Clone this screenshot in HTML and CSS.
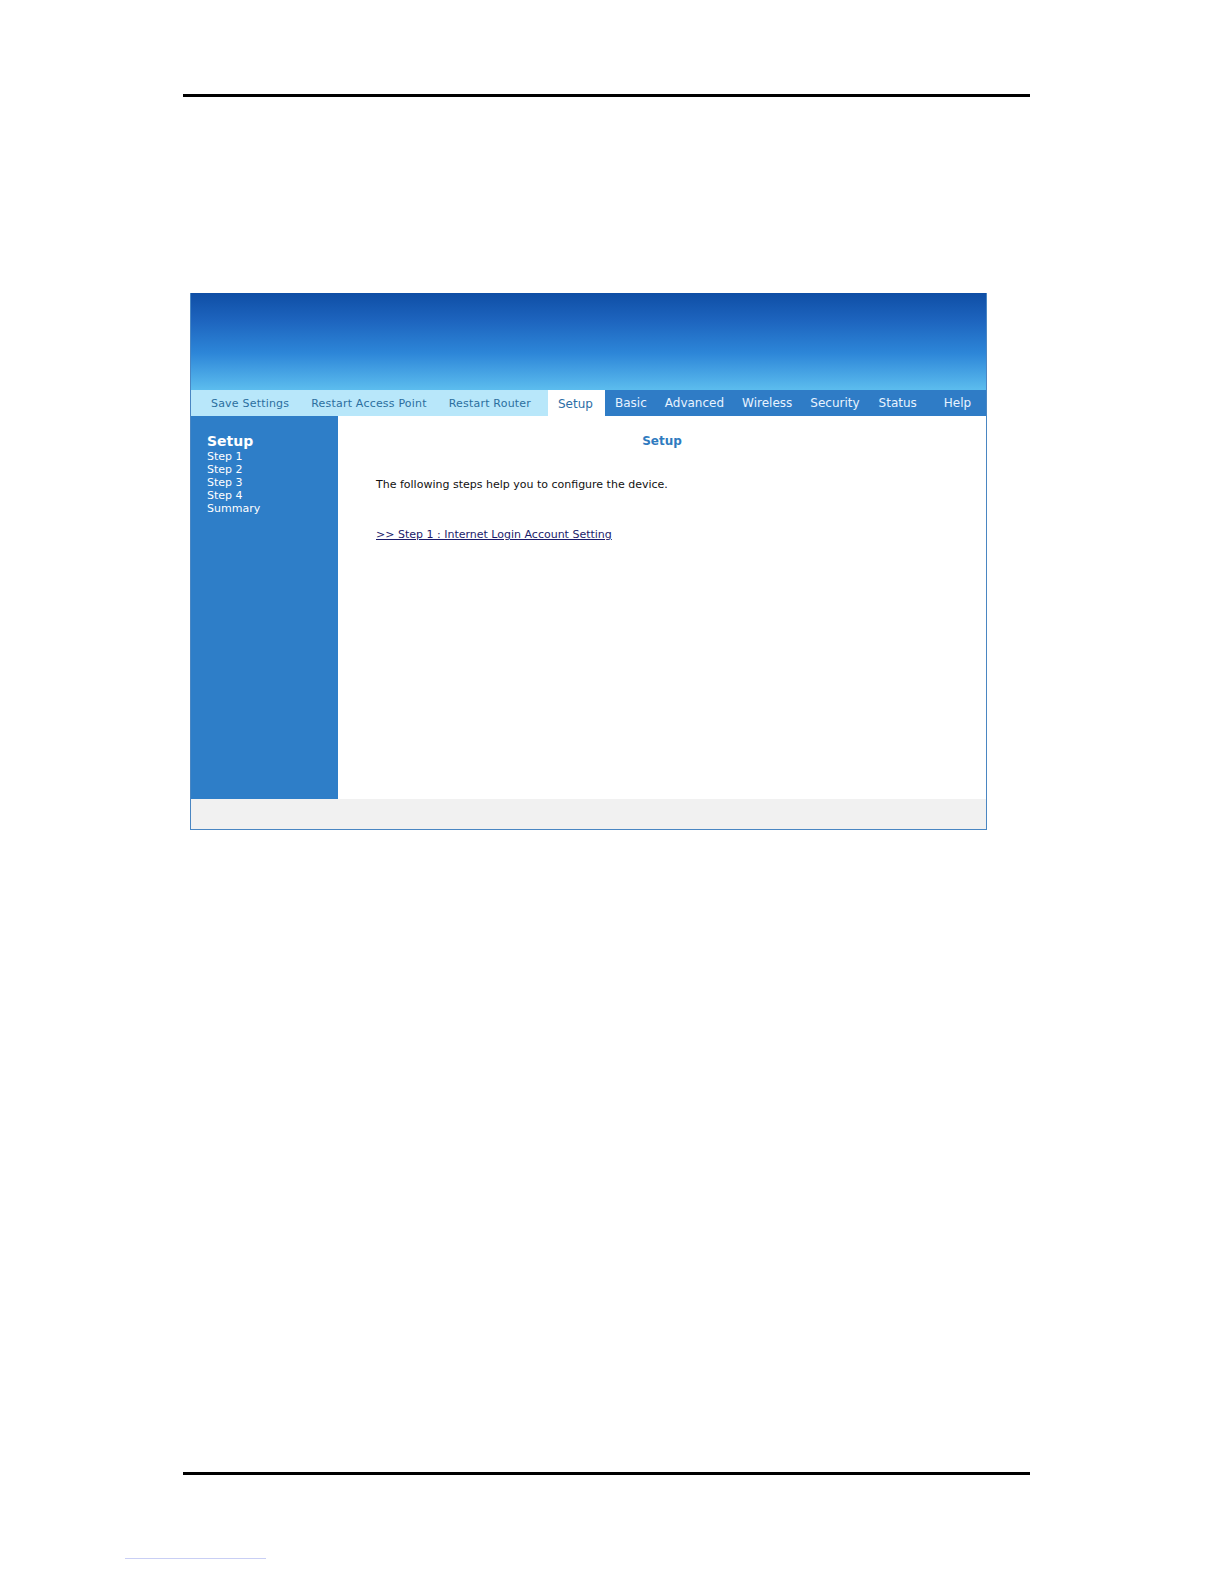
FILE: index.html
```html
<!DOCTYPE html>
<html>
<head>
<meta charset="utf-8">
<title>Setup</title>
<link rel="stylesheet" href="styles.css">
</head>
<body>
<div class="page">
  <div class="rule rule-top"></div>
  <div class="frame">
    <div class="banner"></div>
    <div class="nav">
      <div class="nav-tools">
        <span class="tool first">Save Settings</span>
        <span class="tool">Restart Access Point</span>
        <span class="tool">Restart Router</span>
      </div>
      <span class="tab active">Setup</span>
      <div class="nav-main">
        <span class="tab first">Basic</span>
        <span class="tab">Advanced</span>
        <span class="tab">Wireless</span>
        <span class="tab">Security</span>
        <span class="tab">Status</span>
        <span class="tab help">Help</span>
      </div>
    </div>
    <div class="body">
      <div class="side">
        <div class="side-title">Setup</div>
        <div class="side-item">Step 1</div>
        <div class="side-item">Step 2</div>
        <div class="side-item">Step 3</div>
        <div class="side-item">Step 4</div>
        <div class="side-item">Summary</div>
      </div>
      <div class="content">
        <div class="content-title">Setup</div>
        <p class="intro">The following steps help you to configure the device.</p>
        <a class="step-link" href="#">&gt;&gt; Step 1 : Internet Login Account Setting</a>
      </div>
    </div>
    <div class="foot"></div>
  </div>
  <div class="rule rule-bottom"></div>
  <div class="note-line"></div>
</div>
</body>
</html>
```
FILE: styles.css
```css
html, body {
  margin: 0;
  padding: 0;
  background: #ffffff;
  overflow: hidden;
}
.page {
  font-family: "DejaVu Sans", Verdana, sans-serif;
  padding-top: 1px;
}
.rule {
  height: 3px;
  background: #000;
  width: 847px;
  margin-left: 183px;
}
.rule-top {
  margin-top: 93px;
}
.frame {
  margin-top: 196px;
  margin-left: 190px;
  width: 795px;
  border: 1px solid #4a86c2;
  border-top: 0;
  display: flex;
  flex-direction: column;
}
.banner {
  height: 97px;
  background: linear-gradient(to bottom, #0f4ea5 0%, #1d64be 28%, #2d86d8 62%, #5cbdee 100%);
}
.nav {
  height: 26px;
  display: flex;
  align-items: stretch;
  font-size: 12px;
  line-height: 27px;
}
.nav-tools {
  display: flex;
  background: #b8e7fa;
  width: 357px;
  font-size: 11px;
  color: #2b6f9f;
  letter-spacing: 0.2px;
}
.tool {
  padding: 0 11px 0 11px;
}
.tool.first {
  padding-left: 20px;
}
.tab {
  padding: 0 9px;
  color: #e8f3ff;
}
.tab.active {
  background: #ffffff;
  color: #2c6ea6;
  width: 57px;
  box-sizing: border-box;
  padding: 1px 0 0 10px;
}
.nav-main {
  flex: 1;
  display: flex;
  background: #2f7cc6;
}
.nav-main .tab.first {
  padding-left: 10px;
}
.nav-main .tab:nth-child(4),
.nav-main .tab:nth-child(5) {
  padding-right: 10px;
}
.nav-main .tab.help {
  margin-left: 8px;
}
.body {
  display: flex;
  height: 383px;
}
.side {
  width: 147px;
  background: #2e7ec8;
  color: #ffffff;
  padding: 16px 0 0 16px;
  box-sizing: border-box;
  font-size: 11px;
  line-height: 13px;
}
.side-title {
  font-size: 14px;
  font-weight: bold;
  line-height: 18px;
}
.content {
  flex: 1;
  background: #ffffff;
  padding: 17px 0 0 38px;
  font-size: 11px;
  color: #111;
}
.content-title {
  text-align: center;
  font-size: 12px;
  font-weight: bold;
  color: #2f7bbf;
  line-height: 16px;
  padding-right: 38px;
}
.intro {
  margin: 29px 0 0 0;
  line-height: 14px;
}
.step-link {
  display: inline-block;
  margin-top: 36px;
  color: #1b1b6b;
  text-decoration: underline;
  line-height: 14px;
}
.foot {
  height: 30px;
  background: #f1f1f1;
}
.rule-bottom {
  margin-top: 642px;
}
.note-line {
  margin-top: 83px;
  margin-left: 125px;
  width: 141px;
  height: 1px;
  background: #c9cff5;
}
```
